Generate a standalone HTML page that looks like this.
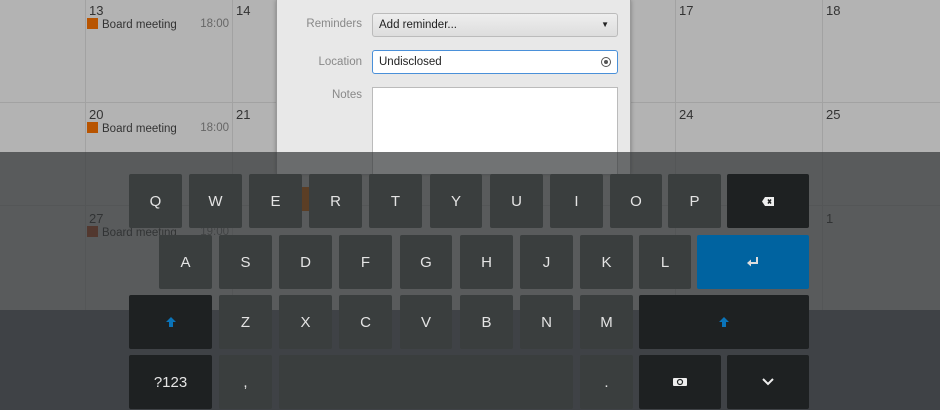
<!DOCTYPE html>
<html><head><style>
*{margin:0;padding:0;box-sizing:border-box}
body{width:940px;height:410px;overflow:hidden;position:relative;font-family:"Liberation Sans","DejaVu Sans",sans-serif;background:#5f616b}
.cal{position:absolute;left:0;top:0;width:940px;height:310px;background:#b3b3b3}
.vl{position:absolute;top:0;height:310px;width:1px;background:#a2a2a2}
.hl{position:absolute;left:0;width:940px;height:1px;background:#a2a2a2}
.num{position:absolute;font-size:13px;color:#333}
.ev{position:absolute;font-size:11.5px;color:#333;width:144px}
.ev i{display:inline-block;width:11px;height:11px;background:#b85400;vertical-align:-1px;margin-right:4px}
.ev span{position:absolute;right:2px;color:#666}
.dlg{position:absolute;left:276px;top:0;width:355px;height:174px;overflow:hidden;background:#e8e8e8;border-left:1px solid #999;border-right:1px solid #999;box-shadow:0 0 4px rgba(0,0,0,.3)}
.lbl{position:absolute;right:268px;font-size:11.5px;color:#888}
.fld{position:absolute;left:95px;width:246px;font-size:11.5px;color:#222;padding-left:6px}
.ov{position:absolute;left:0;top:152px;width:940px;height:258px;background:rgba(49,52,53,.69)}
.k{position:absolute;height:54px;background:#3a3e3e;color:#e4e4e4;font-size:15px;display:flex;align-items:center;justify-content:center;border-radius:2px}
.d{background:#1e2122}
.b{background:#0063a0}
</style></head><body>
<div class="cal">
<div class="vl" style="left:85px"></div><div class="vl" style="left:232px"></div><div class="vl" style="left:675px"></div><div class="vl" style="left:822px"></div>
<div class="hl" style="top:102px"></div><div class="hl" style="top:205px"></div>
<div class="num" style="left:89px;top:3px">13</div><div class="num" style="left:236px;top:3px">14</div>
<div class="num" style="left:679px;top:3px">17</div><div class="num" style="left:826px;top:3px">18</div>
<div class="num" style="left:89px;top:107px">20</div><div class="num" style="left:236px;top:107px">21</div>
<div class="num" style="left:679px;top:107px">24</div><div class="num" style="left:826px;top:107px">25</div>
<div class="num" style="left:89px;top:211px">27</div><div class="num" style="left:826px;top:211px">1</div>
<div class="ev" style="left:87px;top:18px"><i></i>Board meeting<span>18:00</span></div>
<div class="ev" style="left:87px;top:122px"><i></i>Board meeting<span>18:00</span></div>
<div class="ev" style="left:87px;top:226px"><i style="background:#9a4020"></i>Board meeting<span>19:00</span></div>
</div>
<div style="position:absolute;left:302px;top:187px;width:9px;height:24px;background:#b85400"></div>
<div class="dlg">
<div class="lbl" style="top:18px">Reminders</div>
<div class="fld" style="top:13px;height:24px;line-height:22px;border:1px solid #bbb;border-radius:3px;background:linear-gradient(#eee,#ddd)">Add reminder...<span style="position:absolute;right:8px;font-size:8px">▼</span></div>
<div class="lbl" style="top:56px">Location</div>
<div class="fld" style="top:50px;height:24px;line-height:22px;border:1px solid #4a90d9;border-radius:3px;background:#fff">Undisclosed<span style="position:absolute;right:6px;top:6px;width:10px;height:10px;border:1.5px solid #555;border-radius:50%"><span style="position:absolute;left:1.5px;top:1.5px;width:4px;height:4px;background:#555;border-radius:50%"></span></span></div>
<div class="lbl" style="top:89px">Notes</div>
<div class="fld" style="top:87px;height:100px;border:1px solid #bbb;background:#fff"></div>
</div>
<div class="ov"></div>
<div class="k" style="left:129px;top:174px;width:53px">Q</div>
<div class="k" style="left:189px;top:174px;width:53px">W</div>
<div class="k" style="left:249px;top:174px;width:53px">E</div>
<div class="k" style="left:309px;top:174px;width:53px">R</div>
<div class="k" style="left:369px;top:174px;width:53px">T</div>
<div class="k" style="left:430px;top:174px;width:52px">Y</div>
<div class="k" style="left:490px;top:174px;width:53px">U</div>
<div class="k" style="left:550px;top:174px;width:53px">I</div>
<div class="k" style="left:610px;top:174px;width:52px">O</div>
<div class="k" style="left:668px;top:174px;width:53px">P</div>
<div class="k d" style="left:727px;top:174px;width:82px"><svg width="12" height="9" viewBox="0 0 12 9"><path d="M3 0H12V9H3L0 4.5Z" fill="#eee"/><path d="M6 2.5L9 6.5M9 2.5L6 6.5" stroke="#1e2122" stroke-width="1.5"/></svg></div>
<div class="k" style="left:159px;top:235px;width:53px">A</div>
<div class="k" style="left:219px;top:235px;width:53px">S</div>
<div class="k" style="left:279px;top:235px;width:53px">D</div>
<div class="k" style="left:339px;top:235px;width:53px">F</div>
<div class="k" style="left:400px;top:235px;width:52px">G</div>
<div class="k" style="left:460px;top:235px;width:53px">H</div>
<div class="k" style="left:520px;top:235px;width:53px">J</div>
<div class="k" style="left:580px;top:235px;width:53px">K</div>
<div class="k" style="left:639px;top:235px;width:52px">L</div>
<div class="k b" style="left:697px;top:235px;width:112px"><svg width="12" height="10" viewBox="0 0 12 10"><path d="M10 0V6H3" stroke="#ddd" stroke-width="2" fill="none"/><path d="M0 6L4 2.5V9.5Z" fill="#ddd"/></svg></div>
<div class="k d" style="left:129px;top:295px;width:83px"><svg width="10" height="10" viewBox="0 0 10 10"><path d="M5 0L10 5H7V10H3V5H0Z" fill="#0a73b8"/></svg></div>
<div class="k" style="left:219px;top:295px;width:53px">Z</div>
<div class="k" style="left:279px;top:295px;width:53px">X</div>
<div class="k" style="left:339px;top:295px;width:53px">C</div>
<div class="k" style="left:400px;top:295px;width:52px">V</div>
<div class="k" style="left:460px;top:295px;width:53px">B</div>
<div class="k" style="left:520px;top:295px;width:53px">N</div>
<div class="k" style="left:580px;top:295px;width:53px">M</div>
<div class="k d" style="left:639px;top:295px;width:170px"><svg width="10" height="10" viewBox="0 0 10 10"><path d="M5 0L10 5H7V10H3V5H0Z" fill="#0a73b8"/></svg></div>
<div class="k d" style="left:129px;top:355px;width:83px">?123</div>
<div class="k" style="left:219px;top:355px;width:53px">,</div>
<div class="k" style="left:279px;top:355px;width:294px"></div>
<div class="k" style="left:580px;top:355px;width:53px">.</div>
<div class="k d" style="left:639px;top:355px;width:82px"><svg width="14" height="10" viewBox="0 0 14 10"><rect x="0" y="1" width="14" height="8" rx="1" fill="#eee"/><circle cx="7" cy="5" r="2.5" fill="none" stroke="#1e2122" stroke-width="1.2"/></svg></div>
<div class="k d" style="left:727px;top:355px;width:82px"><svg width="12" height="8" viewBox="0 0 12 8"><path d="M1 1L6 6L11 1" stroke="#eee" stroke-width="2" fill="none"/></svg></div>
</body></html>
